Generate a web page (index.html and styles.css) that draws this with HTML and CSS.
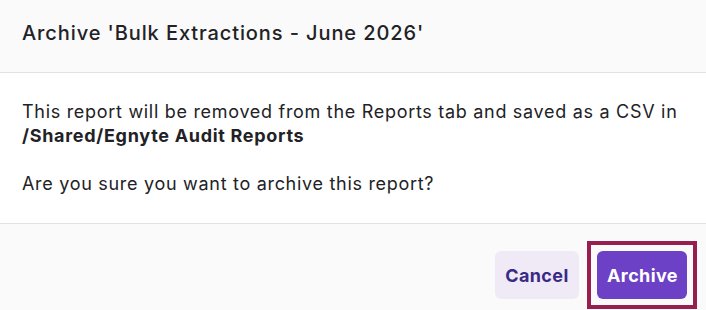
FILE: index.html
```html
<!DOCTYPE html>
<html lang="en">
<head>
    <meta charset="UTF-8">
    <meta name="viewport" content="width=device-width, initial-scale=1.0">
    <title>Archive report</title>
    <link rel="stylesheet" href="styles.css">
</head>
<body>

<div class="modal">
    <div class="modal-header">
        <h2>Archive 'Bulk Extractions - June 2026'</h2>
    </div>
    <div class="modal-body">
        <p>This report will be removed from the Reports tab and saved as a CSV in <strong>/Shared/Egnyte Audit Reports</strong></p>
        <p>Are you sure you want to archive this report?</p>
    </div>
    <div class="modal-footer">
        <button class="btn btn-secondary">Cancel</button>
        <button class="btn btn-primary focused">Archive</button>
    </div>
</div>

</body>
</html>
```

FILE: styles.css
```css
body {
    font-family: Inter, "Noto Sans", sans-serif;
    margin: 0;
    background-color: #fff;
    color: #222226;
    overflow: hidden;
}
.modal {
    width: 100%;
}
.modal-header {
    background-color: #fafafa;
    border-bottom: 1px solid #e2e2e2;
    padding: 19px 22px 25px;
}
.modal-header h2 {
    margin: 0;
    font-size: 20px;
    font-weight: 500;
    line-height: 28px;
    letter-spacing: 0.9px;
}
.modal-body {
    padding: 27px 22px 27px;
    font-size: 18px;
    line-height: 24px;
    letter-spacing: 0.7px;
}
.modal-body p {
    margin: 0 0 24px;
}
.modal-body p:last-child {
    margin-bottom: 0;
}
.modal-body strong {
    font-weight: 700;
    letter-spacing: 0.7px;
}
.modal-footer {
    background-color: #fafafa;
    border-top: 1px solid #e2e2e2;
    padding: 27px 19px 11px;
    display: flex;
    justify-content: flex-end;
    gap: 18px;
}
.btn {
    position: relative;
    font-family: Inter, "Noto Sans", sans-serif;
    font-size: 18px;
    font-weight: 700;
    letter-spacing: 0.4px;
    height: 48px;
    padding: 0 10px;
    border: none;
    border-radius: 6px;
    cursor: pointer;
}
.btn-secondary {
    background-color: #f0eaf7;
    color: #3a2a86;
    width: 84px;
}
.btn-primary {
    background-color: #6c41c5;
    color: #fff;
    width: 90px;
}
.focused::after {
    content: "";
    position: absolute;
    top: -10px;
    left: -10px;
    right: -10px;
    bottom: -10px;
    border: 4px solid #971f50;
}
```
